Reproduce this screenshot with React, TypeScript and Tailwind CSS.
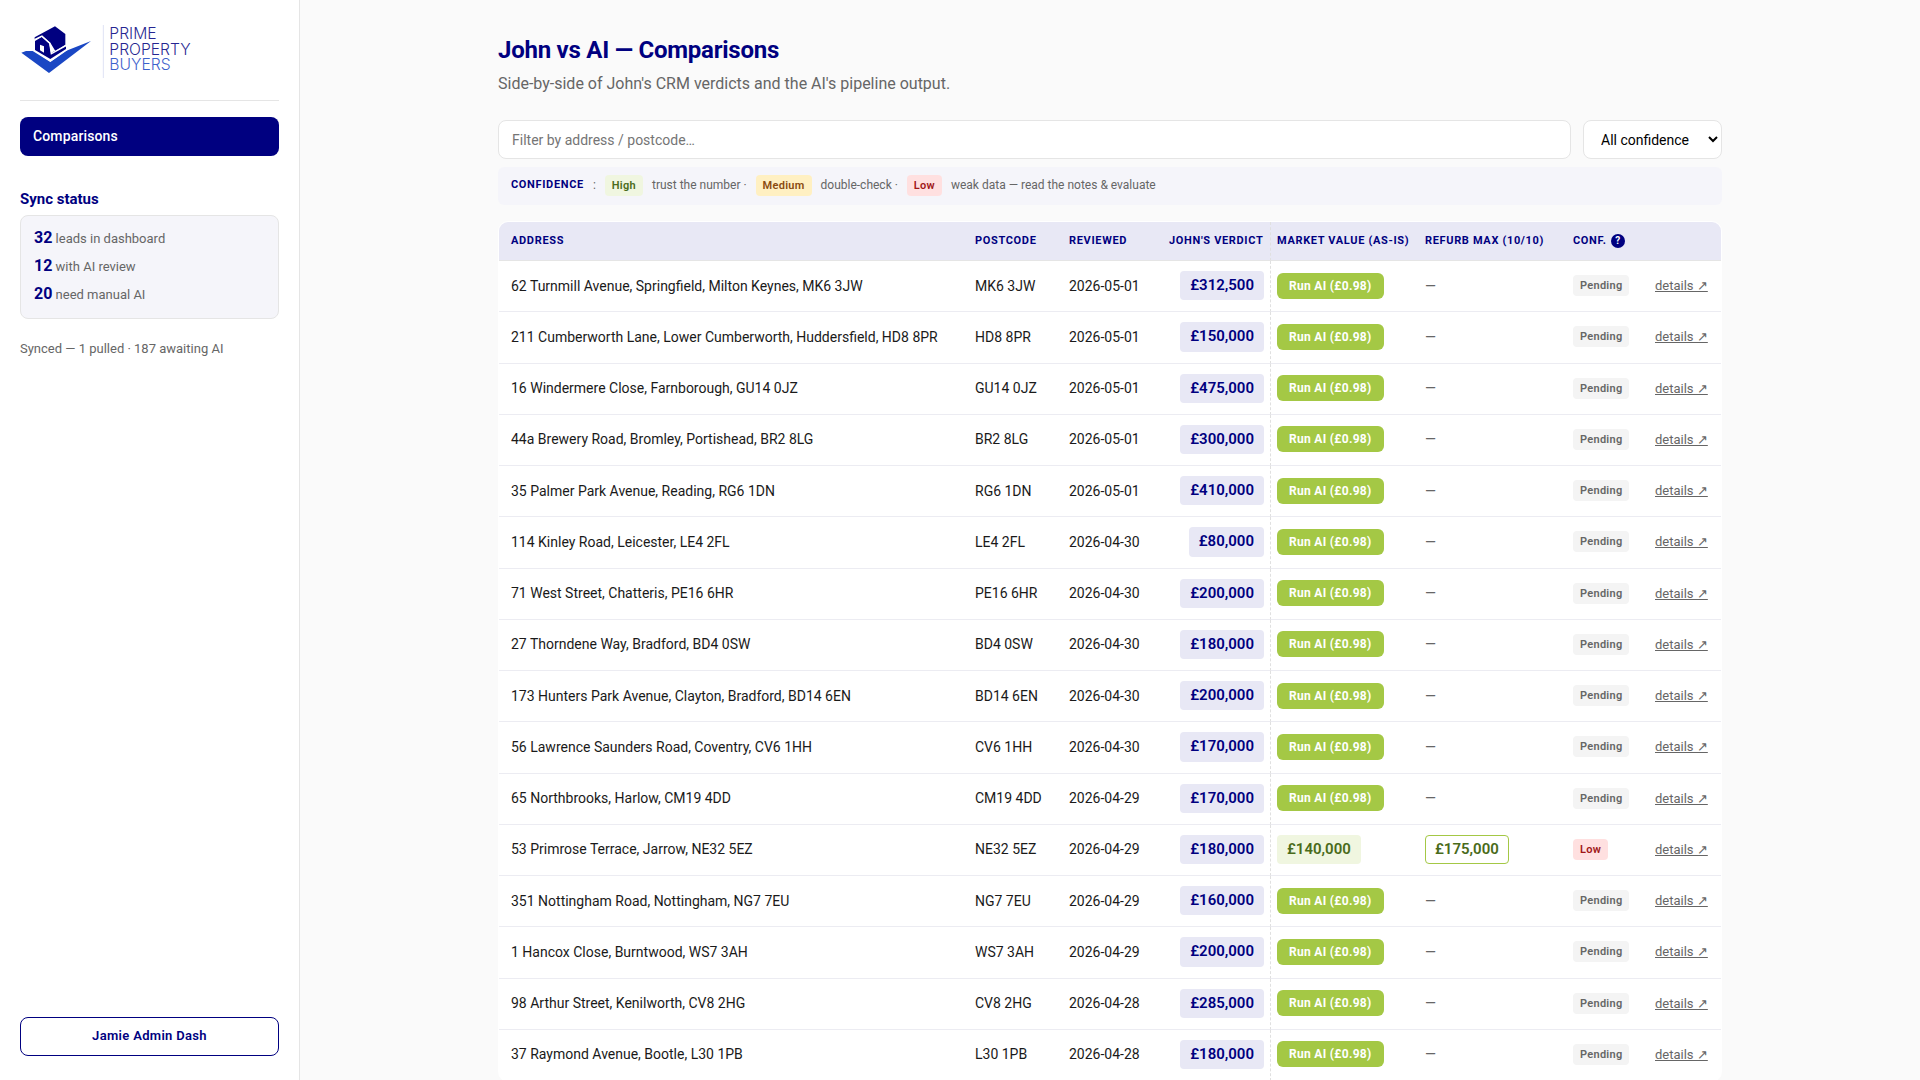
import { useState } from 'react';

type Lead = {
  address: string;
  postcode: string;
  reviewed: string;
  verdict: string;
  market?: string;
  refurb?: string;
};

const leads: Lead[] = [
  { address: '62 Turnmill Avenue, Springfield, Milton Keynes, MK6 3JW', postcode: 'MK6 3JW', reviewed: '2026-05-01', verdict: '£312,500' },
  { address: '211 Cumberworth Lane, Lower Cumberworth, Huddersfield, HD8 8PR', postcode: 'HD8 8PR', reviewed: '2026-05-01', verdict: '£150,000' },
  { address: '16 Windermere Close, Farnborough, GU14 0JZ', postcode: 'GU14 0JZ', reviewed: '2026-05-01', verdict: '£475,000' },
  { address: '44a Brewery Road, Bromley, Portishead, BR2 8LG', postcode: 'BR2 8LG', reviewed: '2026-05-01', verdict: '£300,000' },
  { address: '35 Palmer Park Avenue, Reading, RG6 1DN', postcode: 'RG6 1DN', reviewed: '2026-05-01', verdict: '£410,000' },
  { address: '114 Kinley Road, Leicester, LE4 2FL', postcode: 'LE4 2FL', reviewed: '2026-04-30', verdict: '£80,000' },
  { address: '71 West Street, Chatteris, PE16 6HR', postcode: 'PE16 6HR', reviewed: '2026-04-30', verdict: '£200,000' },
  { address: '27 Thorndene Way, Bradford, BD4 0SW', postcode: 'BD4 0SW', reviewed: '2026-04-30', verdict: '£180,000' },
  { address: '173 Hunters Park Avenue, Clayton, Bradford, BD14 6EN', postcode: 'BD14 6EN', reviewed: '2026-04-30', verdict: '£200,000' },
  { address: '56 Lawrence Saunders Road, Coventry, CV6 1HH', postcode: 'CV6 1HH', reviewed: '2026-04-30', verdict: '£170,000' },
  { address: '65 Northbrooks, Harlow, CM19 4DD', postcode: 'CM19 4DD', reviewed: '2026-04-29', verdict: '£170,000' },
  { address: '53 Primrose Terrace, Jarrow, NE32 5EZ', postcode: 'NE32 5EZ', reviewed: '2026-04-29', verdict: '£180,000', market: '£140,000', refurb: '£175,000' },
  { address: '351 Nottingham Road, Nottingham, NG7 7EU', postcode: 'NG7 7EU', reviewed: '2026-04-29', verdict: '£160,000' },
  { address: '1 Hancox Close, Burntwood, WS7 3AH', postcode: 'WS7 3AH', reviewed: '2026-04-29', verdict: '£200,000' },
  { address: '98 Arthur Street, Kenilworth, CV8 2HG', postcode: 'CV8 2HG', reviewed: '2026-04-28', verdict: '£285,000' },
  { address: '37 Raymond Avenue, Bootle, L30 1PB', postcode: 'L30 1PB', reviewed: '2026-04-28', verdict: '£180,000' },
];

const stats = [
  { count: 32, label: 'leads in dashboard' },
  { count: 12, label: 'with AI review' },
  { count: 20, label: 'need manual AI' },
];

const badgeStyles = {
  High: 'bg-[#f0f6e0] text-[#4a6b1a]',
  Medium: 'bg-[#fff0c2] text-[#8a4b10]',
  Low: 'bg-[#ffe0e0] text-[#a01818]',
  Pending: 'bg-[#f4f4f4] text-[#666]',
};

const Badge = ({ level }: { level: keyof typeof badgeStyles }) => (
  <span className={`inline-block rounded px-[7px] text-[11px] leading-[21px] font-semibold tracking-wide ${badgeStyles[level]}`}>
    {level}
  </span>
);

const Logo = () => (
  <svg viewBox="60 72 540 162" className="h-[54px] w-[180px]" role="img" aria-label="Prime Property Buyers">
    {/* tick */}
    <path d="M64 158 L78 153 L103 153 L151 185 L197 153 L273 123 L147 219 Z" fill="#1a47c4" />
    <path d="M100 150 L151 182 L200 148" fill="none" stroke="#fff" strokeWidth="7" />
    {/* house */}
    <path d="M104 112 L165 79 L196 102 V134 L166 153 L151 128 L126 108 L104 118 Z" fill="#000080" />
    <path d="M105 123 L125 111 L148 131 L153 158 L198 138 V147 L151 177 L105 150 Z" fill="#000080" />
    <path d="M104 119 L126 108 L149 129 L154 161 L198 137" fill="none" stroke="#fff" strokeWidth="4" />
    <path d="M120 134 L132 139 V158 L120 151 Z" fill="#fff" />
    <path d="M310 75 V234" stroke="#dfe2f5" strokeWidth="3" />
    <g fontFamily="Inter, sans-serif" fontWeight="300" fontSize="47" opacity="0.85">
      <text x="328" y="118" fill="#000080">PRIME</text>
      <text x="328" y="164" fill="#000080">PROPERTY</text>
      <text x="328" y="210" fill="#1a47c4">BUYERS</text>
    </g>
  </svg>
);

const Sidebar = () => (
  <aside className="sticky top-0 flex h-screen w-[300px] shrink-0 flex-col border-r border-[#e5e5e5] bg-white px-5 py-6">
    <div className="border-b border-[#e5e5e5] pb-[22px]">
      <Logo />
    </div>

    <nav className="mt-4">
      <a href="#comparisons" className="block rounded-lg bg-[#000080] px-[13px] text-sm leading-[39px] font-medium tracking-[0.01em] text-white">
        Comparisons
      </a>
    </nav>

    <h2 className="mt-8 text-[15px] leading-[22px] font-bold text-[#000080]">Sync status</h2>
    <div className="mt-[5px] rounded-lg border border-[#e5e5e5] bg-[#f5f5fa] px-[13px] py-[9px] text-[13px] text-[#666]">
      {stats.map(({ count, label }) => (
        <p key={label} className="leading-7">
          <strong className="text-base leading-none font-bold text-[#000080]">{count}</strong> {label}
        </p>
      ))}
    </div>
    <p className="mt-5 text-[13px] leading-5 text-[#666]">Synced — 1 pulled · 187 awaiting AI</p>

    <button
      type="button"
      className="mt-auto h-[39px] rounded-lg border border-[#000080] bg-white text-[13px] font-semibold tracking-wide text-[#000080]"
    >
      Jamie Admin Dash
    </button>
  </aside>
);

const th = 'border-b border-[#e5e5e5] text-left text-[11px] font-bold tracking-[0.06em] uppercase whitespace-nowrap';
const td = 'border-b border-[#ececf2] pt-2.5 pb-[11px] leading-none';
const price = 'inline-block rounded text-[15px] leading-[1.55] font-semibold';

const LeadRow = ({ lead }: { lead: Lead }) => (
  <tr>
    <td className={`${td} px-3`}>{lead.address}</td>
    <td className={`${td} px-3 whitespace-nowrap`}>{lead.postcode}</td>
    <td className={`${td} px-3 whitespace-nowrap`}>{lead.reviewed}</td>
    <td className={`${td} border-r border-r-[#e0e0e0] pr-1.5 pl-3 text-right [border-right-style:dashed]`}>
      <span className={`${price} bg-[#e8e8f5] px-2.5 py-[3px] text-[#000080]`}>{lead.verdict}</span>
    </td>
    <td className={`${td} px-1.5`}>
      {lead.market ? (
        <span className={`${price} bg-[#f0f6e0] px-2.5 py-[3px] text-[#4a6b1a]`}>{lead.market}</span>
      ) : (
        <button type="button" className="block h-[26px] rounded-md bg-[#a4c845] px-3 text-xs font-bold tracking-wide text-white">
          Run AI (£0.98)
        </button>
      )}
    </td>
    <td className={`${td} px-1.5`}>
      {lead.refurb ? (
        <span className={`${price} border border-[#a4c845] bg-white px-[9px] py-[2px] text-[#4a6b1a]`}>{lead.refurb}</span>
      ) : (
        <span className="text-[#666]">—</span>
      )}
    </td>
    <td className={`${td} px-3`}>
      <Badge level={lead.market ? 'Low' : 'Pending'} />
    </td>
    <td className={`${td} px-3 text-[13px] whitespace-nowrap`}>
      <a href="#details" className="text-[#666] underline">details ↗</a>
    </td>
  </tr>
);

const App = () => {
  const [query, setQuery] = useState('');
  const [confidence, setConfidence] = useState('all');

  const visible = leads.filter((lead) => {
    const level = lead.market ? 'low' : 'pending';
    return lead.address.toLowerCase().includes(query.toLowerCase()) && (confidence === 'all' || confidence === level);
  });

  return (
    <div className="flex h-screen overflow-hidden bg-[#fafafa] font-['Roboto',sans-serif] text-sm text-[#1a1a1a]">
      <Sidebar />

      <main className="min-w-0 flex-1 overflow-hidden">
        <div className="mx-auto max-w-[1280px] px-7 pt-8">
          <h1 className="text-2xl leading-9 font-bold tracking-[-0.01em] text-[#000080]">John vs AI — Comparisons</h1>
          <p className="mt-1 text-base leading-6 text-[#666]">Side-by-side of John's CRM verdicts and the AI's pipeline output.</p>

          <div className="mt-6 flex gap-3">
            <input
              type="text"
              aria-label="Filter by address or postcode"
              placeholder="Filter by address / postcode…"
              value={query}
              onChange={(e) => setQuery(e.target.value)}
              className="h-[39px] min-w-0 flex-1 rounded-lg border border-[#e5e5e5] bg-white px-[13px] text-sm placeholder:text-[#757575]"
            />
            <select
              aria-label="Confidence"
              value={confidence}
              onChange={(e) => setConfidence(e.target.value)}
              className="h-[39px] w-[139px] rounded-lg border border-[#e5e5e5] bg-white pl-[13px] text-sm text-black"
            >
              <option value="all">All confidence</option>
              <option value="high">High</option>
              <option value="medium">Medium</option>
              <option value="low">Low</option>
              <option value="pending">Pending</option>
            </select>
          </div>

          <div className="mt-2 flex h-[38px] items-center gap-[9px] rounded-md bg-[#f5f5fa] px-[13px] pb-0.5 text-xs text-[#666]">
            <strong className="text-[11px] font-bold tracking-[0.06em] text-[#000080] uppercase">Confidence</strong>
            <span>:</span>
            <Badge level="High" />
            <span>trust the number ·</span>
            <Badge level="Medium" />
            <span>double-check ·</span>
            <Badge level="Low" />
            <span>weak data — read the notes &amp; evaluate</span>
          </div>

          <div className="mt-4 overflow-hidden rounded-[10px] border border-white bg-white">
            <table className="w-full table-fixed border-separate border-spacing-0">
              <colgroup>
                <col />
                <col className="w-[94px]" />
                <col className="w-[100px]" />
                <col className="w-[114px]" />
                <col className="w-[148px]" />
                <col className="w-[142px]" />
                <col className="w-[82px]" />
                <col className="w-[78px]" />
              </colgroup>
              <thead className="bg-[#e8e8f5] text-[#000080]">
                <tr className="h-[39px]">
                  <th className={`${th} px-3`}>Address</th>
                  <th className={`${th} px-3`}>Postcode</th>
                  <th className={`${th} px-3`}>Reviewed</th>
                  <th className={`${th} border-r border-r-[#e0e0e0] pr-1.5 pl-3 [border-right-style:dashed]`}>John's verdict</th>
                  <th className={`${th} px-1.5`}>Market value (as-is)</th>
                  <th className={`${th} px-1.5`}>Refurb max (10/10)</th>
                  <th className={`${th} px-3`}>
                    <span className="flex items-center gap-1">
                      Conf.
                      <span className="size-3.5 rounded-full bg-[#000080] text-center text-[10px] leading-[14px] tracking-normal text-white">?</span>
                    </span>
                  </th>
                  <th className={`${th} px-3`} aria-label="Details" />
                </tr>
              </thead>
              <tbody>
                {visible.map((lead) => (
                  <LeadRow key={lead.address} lead={lead} />
                ))}
              </tbody>
            </table>
          </div>
        </div>
      </main>
    </div>
  );
};

export default App;
